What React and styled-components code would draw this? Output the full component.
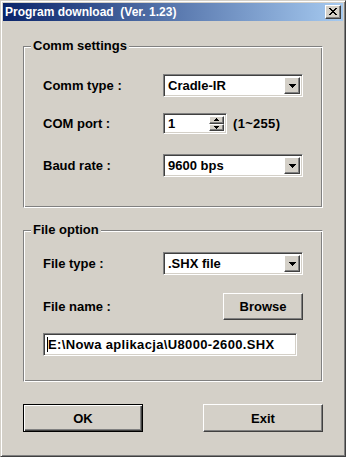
import React from "react";
import styled, { createGlobalStyle } from "styled-components";

const Global = createGlobalStyle`
  html, body { margin: 0; padding: 0; background: #d4d0c8; }
  * { box-sizing: border-box; }
`;

const Window = styled.div`
  width: 346px;
  height: 457px;
  background: #d4d0c8;
  border: 1px solid;
  border-color: #d4d0c8 #404040 #404040 #d4d0c8;
  box-shadow: inset 1px 1px 0 #fff, inset -1px -1px 0 #808080;
  padding: 2px;
  display: flex;
  flex-direction: column;
  font-family: "Liberation Sans", Arial, sans-serif;
  font-weight: bold;
  font-size: 13px;
  color: #000;
`;

const TitleBar = styled.div`
  height: 18px;
  flex: none;
  background: linear-gradient(to right, #0a246a, #a6caf0);
  display: flex;
  align-items: center;
  justify-content: space-between;
  padding: 0 2px 0 2px;
`;

const TitleText = styled.span`
  color: #fff;
  font-size: 12px;
  font-weight: bold;
  white-space: pre;
  line-height: 18px;
`;

const Raised = `
  border: 1px solid;
  border-color: #fff #404040 #404040 #fff;
  box-shadow: inset -1px -1px 0 #808080, inset 1px 1px 0 #d4d0c8;
  background: #d4d0c8;
`;

const CloseBtn = styled.div`
  ${Raised}
  width: 16px;
  height: 14px;
  display: flex;
  align-items: center;
  justify-content: center;
  padding-bottom: 1px;
`;

const Body = styled.div`
  display: flex;
  flex-direction: column;
  padding: 25px 20px 0 20px;
`;

const Group = styled.div`
  position: relative;
  height: ${(p) => p.$h}px;
  margin-top: ${(p) => p.$mt || 0}px;
  border: 1px solid;
  border-color: #808080 #fff #fff #808080;
  box-shadow: inset 1px 1px 0 #fff, inset -1px -1px 0 #808080;
  padding: ${(p) => p.$pt}px 0 0 19px;
  display: flex;
  flex-direction: column;
`;

const GroupTitle = styled.span`
  position: absolute;
  left: 7px;
  top: -9px;
  padding: 0 2px;
  background: #d4d0c8;
  line-height: 16px;
`;

const Row = styled.div`
  display: flex;
  align-items: center;
  height: ${(p) => p.$h}px;
  margin-top: ${(p) => p.$mt || 0}px;
`;

const Label = styled.span`
  width: 120px;
  flex: none;
`;

const Sunken = styled.div`
  border: 1px solid;
  border-color: #808080 #fff #fff #808080;
  box-shadow: inset 1px 1px 0 #404040, inset -1px -1px 0 #d4d0c8;
  background: #fff;
  padding: 2px;
  display: flex;
  align-items: stretch;
`;

const Combo = styled(Sunken)`
  width: 140px;
  height: 23px;
`;

const FieldText = styled.span`
  flex: 1;
  display: flex;
  align-items: center;
  padding-left: ${(p) => p.$pl ?? 2}px;
  letter-spacing: ${(p) => p.$ls ?? 0}px;
  white-space: pre;
  overflow: hidden;
`;

const DropBtn = styled.div`
  ${Raised}
  width: 16px;
  flex: none;
  display: flex;
  align-items: center;
  justify-content: center;
`;

const Spin = styled(Sunken)`
  width: 64px;
  height: 21px;
`;

const SpinCol = styled.div`
  width: 15px;
  flex: none;
  display: flex;
  flex-direction: column;
`;

const SpinBtn = styled.div`
  ${Raised}
  flex: 1;
  display: flex;
  align-items: center;
  justify-content: center;
`;

const Hint = styled.span`
  margin-left: 6px;
  letter-spacing: 0.3px;
`;

const BtnSlot = styled.div`
  width: 140px;
  display: flex;
  justify-content: flex-end;
`;

const Button = styled.div`
  width: ${(p) => p.$w}px;
  height: ${(p) => p.$h}px;
  display: flex;
  align-items: center;
  justify-content: center;
  background: #d4d0c8;
  border: 1px solid;
  ${(p) =>
    p.$default
      ? `border-color: #000;
         box-shadow: inset 1px 1px 0 #fff, inset -1px -1px 0 #404040, inset -2px -2px 0 #808080;`
      : `border-color: #fff #404040 #404040 #fff;
         box-shadow: inset -1px -1px 0 #808080, inset 1px 1px 0 #d4d0c8;`}
`;

const PathEdit = styled(Sunken)`
  width: 254px;
  height: 23px;
`;

const Caret = styled.span`
  display: inline-block;
  width: 1px;
  height: 15px;
  background: #000;
`;

const ButtonRow = styled.div`
  display: flex;
  justify-content: space-between;
  margin-top: 22px;
`;

const CloseGlyph = () => (
  <svg width="8" height="7" viewBox="0 0 8 7" shapeRendering="crispEdges">
    <path
      d="M0 0h2v1H0zM6 0h2v1H6zM1 1h2v1H1zM5 1h2v1H5zM2 2h4v1H2zM3 3h2v1H3zM2 4h4v1H2zM1 5h2v1H1zM5 5h2v1H5zM0 6h2v1H0zM6 6h2v1H6z"
      fill="#000"
    />
  </svg>
);

const DownArrow = () => (
  <svg width="7" height="4" viewBox="0 0 7 4" shapeRendering="crispEdges">
    <path d="M0 0h7v1H0zM1 1h5v1H1zM2 2h3v1H2zM3 3h1v1H3z" fill="#000" />
  </svg>
);

const SmallArrow = ({ up }) => (
  <svg width="5" height="3" viewBox="0 0 5 3" shapeRendering="crispEdges">
    <path
      d={up ? "M2 0h1v1H2zM1 1h3v1H1zM0 2h5v1H0z" : "M0 0h5v1H0zM1 1h3v1H1zM2 2h1v1H2z"}
      fill="#000"
    />
  </svg>
);

const ComboBox = ({ value }) => (
  <Combo>
    <FieldText>{value}</FieldText>
    <DropBtn>
      <DownArrow />
    </DropBtn>
  </Combo>
);

export default function App() {
  return (
    <>
      <Global />
      <Window>
        <TitleBar>
          <TitleText>{"Program download  (Ver. 1.23)"}</TitleText>
          <CloseBtn>
            <CloseGlyph />
          </CloseBtn>
        </TitleBar>
        <Body>
          <Group $h={162} $pt={27}>
            <GroupTitle>Comm settings</GroupTitle>
            <Row $h={23}>
              <Label>Comm type :</Label>
              <ComboBox value="Cradle-IR" />
            </Row>
            <Row $h={21} $mt={16}>
              <Label>COM port :</Label>
              <Spin>
                <FieldText>1</FieldText>
                <SpinCol>
                  <SpinBtn>
                    <SmallArrow up />
                  </SpinBtn>
                  <SpinBtn>
                    <SmallArrow />
                  </SpinBtn>
                </SpinCol>
              </Spin>
              <Hint>(1~255)</Hint>
            </Row>
            <Row $h={23} $mt={20}>
              <Label>Baud rate :</Label>
              <ComboBox value="9600 bps" />
            </Row>
          </Group>
          <Group $h={152} $pt={21} $mt={22}>
            <GroupTitle>File option</GroupTitle>
            <Row $h={23}>
              <Label>File type :</Label>
              <ComboBox value=".SHX file" />
            </Row>
            <Row $h={27} $mt={18}>
              <Label>File name :</Label>
              <BtnSlot>
                <Button $w={80} $h={27}>
                  Browse
                </Button>
              </BtnSlot>
            </Row>
            <Row $h={23} $mt={13}>
              <PathEdit>
                <FieldText $pl={1} $ls={0.35}>
                  <Caret />
                  {"E:\\Nowa aplikacja\\U8000-2600.SHX"}
                </FieldText>
              </PathEdit>
            </Row>
          </Group>
          <ButtonRow>
            <Button $w={120} $h={28} $default>
              OK
            </Button>
            <Button $w={120} $h={28}>
              Exit
            </Button>
          </ButtonRow>
        </Body>
      </Window>
    </>
  );
}
